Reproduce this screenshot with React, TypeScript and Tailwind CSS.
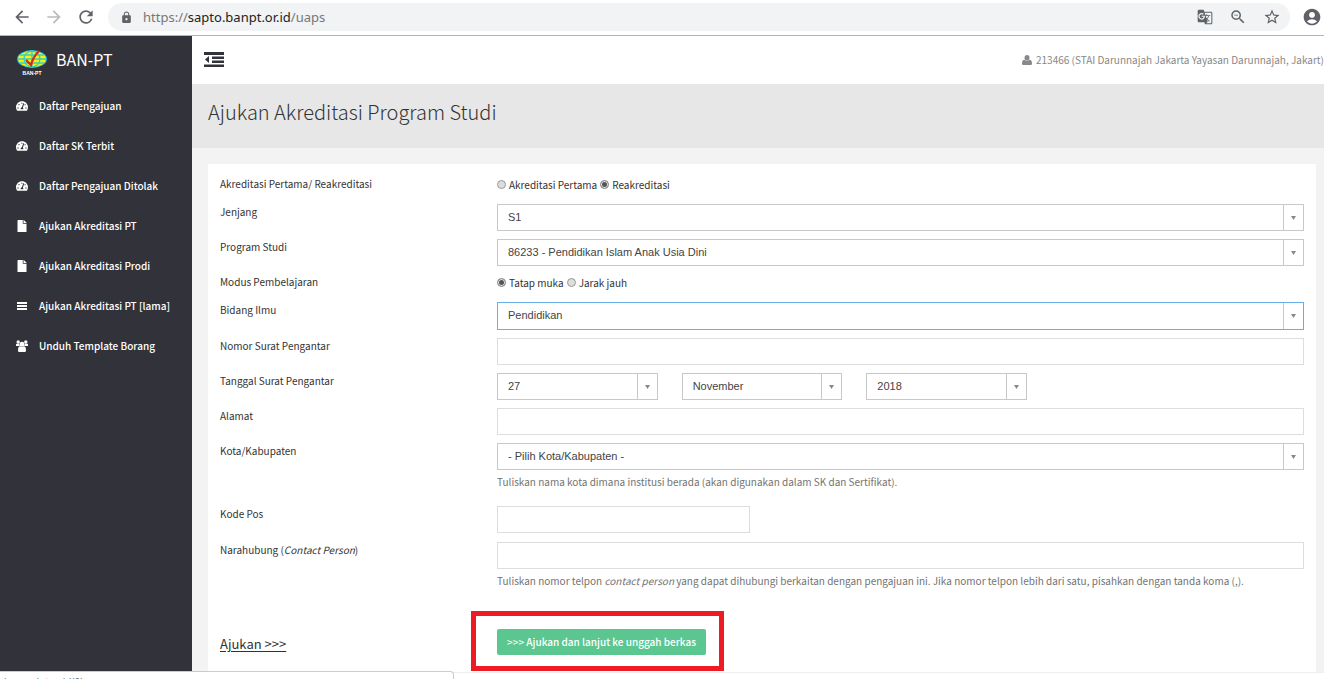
import type { ReactNode } from "react";
import { FaFile, FaTachometerAlt } from "react-icons/fa";
import { MdAccountCircle, MdArrowBack, MdArrowForward, MdGTranslate, MdLock, MdRefresh, MdStarBorder, MdZoomOut } from "react-icons/md";

const menu = [
  { label: "Daftar Pengajuan", icon: FaTachometerAlt },
  { label: "Daftar SK Terbit", icon: FaTachometerAlt },
  { label: "Daftar Pengajuan Ditolak", icon: FaTachometerAlt },
  { label: "Ajukan Akreditasi PT", icon: FaFile },
  { label: "Ajukan Akreditasi Prodi", icon: FaFile },
  { label: "Ajukan Akreditasi PT [lama]", icon: BarsIcon },
  { label: "Unduh Template Borang", icon: UsersIcon },
];

export default function App() {
  return (
    <div className="flex min-h-screen flex-col bg-white font-['Noto_Sans_CJK_SC',sans-serif] text-[10px] leading-4 text-[#333]">
      <BrowserBar />
      <div className="flex grow">
        <Sidebar />
        <main className="flex min-w-0 grow flex-col bg-[#f3f3f3]">
          <Topbar />
          <div className="flex h-16 items-center bg-[#e7e7e7] px-4 pb-2">
            <h1 className="text-[20px] leading-7 font-light">Ajukan Akreditasi Program Studi</h1>
          </div>
          <div className="grow pt-4 pr-2 pl-4">
            <SubmissionForm />
          </div>
        </main>
      </div>
      <footer className="h-2 border-t border-[#eee]" />
      {/* link preview shown by the browser */}
      <div className="fixed bottom-0 left-0 h-2 w-[454px] overflow-hidden rounded-tr border-t border-r border-[#ccc] bg-white px-1 pt-[2px] font-['Noto_Sans',sans-serif] text-[#666]">
        javascript:void(0)
      </div>
    </div>
  );
}

function BrowserBar() {
  return (
    <div className="flex h-9 items-center border-b border-[#b5b5b5] bg-white pr-[2px] pb-px pl-3 text-[#5f6368]">
      <button aria-label="Kembali" className="mr-3"><MdArrowBack size={20} /></button>
      <button aria-label="Maju" className="mr-3 text-[#bbb]"><MdArrowForward size={20} /></button>
      <button aria-label="Muat ulang" className="mr-3"><MdRefresh size={20} /></button>
      <div className="flex h-7 min-w-0 grow items-center rounded-full bg-[#f1f3f4] pr-[9px] pl-3">
        <MdLock size={13} />
        <span className="ml-[10px] grow font-['Noto_Sans',sans-serif] text-[13px] text-[#777]">
          https://<span className="text-[#222]">sapto.banpt.or.id</span>/uaps
        </span>
        <div className="flex items-center gap-4">
          <button aria-label="Terjemahkan"><MdGTranslate size={16} /></button>
          <button aria-label="Zoom"><MdZoomOut size={18} /></button>
          <button aria-label="Bookmark"><MdStarBorder size={18} /></button>
        </div>
      </div>
      <button aria-label="Profil" className="ml-3"><MdAccountCircle size={20} /></button>
    </div>
  );
}

function Logo() {
  return (
    <svg width="32" height="26" viewBox="0 0 32 26" aria-label="BAN-PT">
      <ellipse cx="16" cy="9" rx="15" ry="9" fill="#19b5dc" />
      <ellipse cx="16" cy="9" rx="14" ry="8" fill="#f7f011" />
      <g fill="none" stroke="#35cfc0" strokeWidth="1.3">
        <path d="M2 9h28M4 5h24M4 13h24M16 1v16" />
        <ellipse cx="16" cy="9" rx="8" ry="8" />
      </g>
      <path d="M10 10l5 5q2-8 8-14" fill="none" stroke="#e8200f" strokeWidth="2.2" />
      <text x="16" y="25" textAnchor="middle" fontSize="5" fontWeight="bold" fill="#fff" fontFamily="Liberation Sans, sans-serif">BAN-PT</text>
    </svg>
  );
}

function BarsIcon({ size }: { size: number }) {
  return (
    <svg width={size} height={size} viewBox="0 0 12 12" fill="currentColor">
      <path d="M1 2h10v2H1zM1 5h10v2H1zM1 8h10v2H1z" />
    </svg>
  );
}

function UsersIcon({ size }: { size: number }) {
  return (
    <svg width={size} height={size} viewBox="0 0 12 12" fill="currentColor">
      <circle cx="2.200" cy="2" r="1.700" />
      <circle cx="9.800" cy="2" r="1.700" />
      <circle cx="6" cy="4.200" r="2.500" />
      <path d="M0 6V4.500Q0 3.500 1 3.800h2.200Q3 5.500 4 6zM12 6V4.500Q12 3.500 11 3.800H8.800Q9 5.500 8 6z" />
      <path d="M2 10.500Q2 6.200 4 6.200q2 1.400 4 0 2 0 2 4.300Q10 12 8.700 12H3.300Q2 12 2 10.500z" />
    </svg>
  );
}

function DedentIcon() {
  return (
    <svg width="20" height="16" viewBox="0 0 20 16" fill="currentColor">
      <path d="M0 0h20v3H0zM8 4.500h12v2.500H8zM8 8.500h12V11H8zM0 12.500h20v2.500H0zM5 4v7L1 7.500z" />
    </svg>
  );
}

function UserIcon() {
  return (
    <svg width="10" height="10" viewBox="0 0 10 10" fill="currentColor">
      <ellipse cx="5" cy="2.700" rx="2.500" ry="2.700" />
      <path d="M0 8.500Q0 4.800 2.500 4.700q2.500 2 5 0Q10 4.800 10 8.500 10 10 8.700 10H1.300Q0 10 0 8.500z" />
    </svg>
  );
}

function Sidebar() {
  return (
    <aside className="w-48 shrink-0 bg-[#32323a] text-white">
      <div className="flex h-[50px] items-start gap-2 pt-[11px] pl-4">
        <div className="pt-[3px]"><Logo /></div>
        <span className="text-[16px] leading-6">BAN-PT</span>
      </div>
      <nav>
        {menu.map(({ label, icon: Icon }) => (
          <a key={label} href="#" className="flex h-10 items-center gap-[11px] pl-4 font-medium">
            <Icon size={12} />
            <span className="pb-px">{label}</span>
          </a>
        ))}
      </nav>
    </aside>
  );
}

function Topbar() {
  return (
    <header className="flex h-12 items-center justify-between bg-white pl-3">
      <button aria-label="Menu" className="text-[#32323a]"><DedentIcon /></button>
      <div className="flex items-center gap-1 text-[#888]">
        <UserIcon />
        213466 (STAI Darunnajah Jakarta Yayasan Darunnajah, Jakart)
      </div>
    </header>
  );
}

function SubmissionForm() {
  return (
    <form className="flex flex-col gap-2 bg-white pt-3 pb-4" onSubmit={(e) => e.preventDefault()}>
      <Row label="Akreditasi Pertama/ Reakreditasi">
        <div className="flex h-5 items-center gap-[3px] pb-[2px]">
          <Radio name="jenis" label="Akreditasi Pertama" />
          <Radio name="jenis" label="Reakreditasi" checked />
        </div>
      </Row>
      <Row label="Jenjang" id="jenjang">
        <Select id="jenjang" value="S1" />
      </Row>
      <Row label="Program Studi" id="prodi">
        <Select id="prodi" value="86233 - Pendidikan Islam Anak Usia Dini" />
      </Row>
      <Row label="Modus Pembelajaran">
        <div className="flex h-5 items-center gap-[3px] pb-[2px]">
          <Radio name="modus" label="Tatap muka" checked />
          <Radio name="modus" label="Jarak jauh" />
        </div>
      </Row>
      <Row label="Bidang Ilmu" id="bidang">
        <Select id="bidang" value="Pendidikan" active />
      </Row>
      <Row label="Nomor Surat Pengantar" id="nomor">
        <TextInput id="nomor" />
      </Row>
      <Row label="Tanggal Surat Pengantar" id="tanggal">
        <div className="-mx-3 grid grid-cols-9">
          <div className="col-span-2 px-3"><Select id="tanggal" value="27" /></div>
          <div className="col-span-2 px-3"><Select id="bulan" value="November" title="Bulan" /></div>
          <div className="col-span-2 px-3"><Select id="tahun" value="2018" title="Tahun" /></div>
        </div>
      </Row>
      <Row label="Alamat" id="alamat">
        <TextInput id="alamat" />
      </Row>
      <Row label="Kota/Kabupaten" id="kota">
        <Select id="kota" value="- Pilih Kota/Kabupaten -" />
        <Help>Tuliskan nama kota dimana institusi berada (akan digunakan dalam SK dan Sertifikat).</Help>
      </Row>
      <Row label="Kode Pos" id="kodepos">
        <div className="-mx-3 grid grid-cols-3 pb-px">
          <div className="px-3"><TextInput id="kodepos" /></div>
        </div>
      </Row>
      <Row label={<>Narahubung (<i>Contact Person</i>)</>} id="narahubung">
        <TextInput id="narahubung" />
        <Help>
          Tuliskan nomor telpon <i>contact person</i> yang dapat dihubungi berkaitan dengan pengajuan ini. Jika nomor
          telpon lebih dari satu, pisahkan dengan tanda koma (,).
        </Help>
      </Row>
      <div className="mt-6 flex">
        <div className="w-1/4 px-3 pt-[3px]">
          <u className="text-[13px] leading-6 underline-offset-2">Ajukan &gt;&gt;&gt;</u>
        </div>
        <div className="w-3/4 px-3">
          <div className="relative inline-block">
            <button className="block h-[26px] rounded-xs bg-[#5bc690] px-[10px] pb-px font-medium text-white">
              &gt;&gt;&gt; Ajukan dan lanjut ke unggah berkas
            </button>
            <div className="pointer-events-none absolute -top-[18px] -right-[18px] -bottom-4 -left-[26px] border-5 border-[#ed1c24]" />
          </div>
        </div>
      </div>
    </form>
  );
}

function Row({ label, id, children }: { label: ReactNode; id?: string; children: ReactNode }) {
  return (
    <div className="flex">
      <div className="w-1/4 px-3">
        {id ? <label htmlFor={id} className="block">{label}</label> : <span className="block">{label}</span>}
      </div>
      <div className="w-3/4 px-3">{children}</div>
    </div>
  );
}

function Radio({ name, label, checked }: { name: string; label: string; checked?: boolean }) {
  return (
    <label className="flex items-center gap-[3px]">
      <input
        type="radio"
        name={name}
        defaultChecked={checked}
        className="mb-[2px] size-[9px] appearance-none rounded-full border border-[#999] bg-[#ddd] checked:bg-[#555] checked:shadow-[inset_0_0_0_1px_#e4e4e4]"
      />
      {label}
    </label>
  );
}

function Select({ id, value, title, active }: { id: string; value: string; title?: string; active?: boolean }) {
  return (
    <div className="relative">
      <select
        id={id}
        aria-label={title}
        className={`block w-full appearance-none rounded-none border bg-white pr-6 pb-[2px] pl-[10px] font-['Liberation_Sans',sans-serif] text-[11px] text-[#444] outline-none ${active ? "h-7 border-[#66afe9]" : "h-[27px] border-[#c8c8c8]"}`}
      >
        <option>{value}</option>
      </select>
      <span className="pointer-events-none absolute inset-y-px right-px flex w-5 items-center justify-center border-l border-[#c8c8c8]">
        <svg width="5" height="4" viewBox="0 0 5 4"><path d="M0 0h5L2.500 4z" fill="#888" /></svg>
      </span>
    </div>
  );
}

function TextInput({ id }: { id: string }) {
  return <input id={id} type="text" className="block h-[27px] w-full border border-[#ddd] bg-white px-2 outline-none" />;
}

function Help({ children }: { children: ReactNode }) {
  return <p className="min-h-7 pt-1 text-[#737373]">{children}</p>;
}
